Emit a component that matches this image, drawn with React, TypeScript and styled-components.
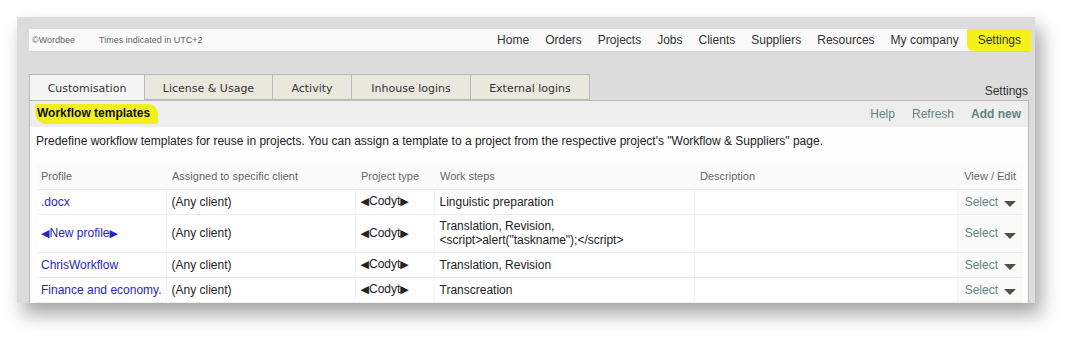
import React from 'react';
import styled, { createGlobalStyle } from 'styled-components';

const Global = createGlobalStyle`
  body {
    margin: 0;
    background: #ffffff;
    font-family: "Liberation Sans", Arial, sans-serif;
  }
`;

const Page = styled.div`
  width: 1083px;
  height: 352px;
  padding: 17px 0 0 17px;
  box-sizing: border-box;
`;

const Frame = styled.div`
  width: 1018px;
  height: 286px;
  background: #dcdcdc;
  box-shadow: 6px 11px 18px rgba(0, 0, 0, 0.36);
  padding: 12px 6px 0 12px;
  box-sizing: border-box;
  overflow: hidden;
`;

const TopBar = styled.div`
  height: 22px;
  background: #f9f9f9;
  border-bottom: 1px solid #cfcfcf;
  display: flex;
  align-items: center;
`;

const Small = styled.span<{ $left: number }>`
  font-size: 9px;
  color: #666;
  margin-left: ${p => p.$left}px;
`;

const Nav = styled.nav`
  margin-left: auto;
  display: flex;
  align-items: center;
  height: 100%;
`;

const NavItem = styled.span<{ $marked?: boolean }>`
  font-size: 12px;
  color: #333;
  padding: 0 8px;
  height: 100%;
  display: flex;
  align-items: center;
  ${p => p.$marked && `
    background: #f4f21a;
    padding: 0 10px 0 11px;
    border-radius: 2px 0 0 6px;
    margin-right: -2px;
  `}
`;

const TabRow = styled.div`
  margin-top: 22px;
  display: flex;
  align-items: flex-end;
  height: 26px;
`;

const Tab = styled.div<{ $active?: boolean; $w: number }>`
  width: ${p => p.$w}px;
  height: 26px;
  box-sizing: border-box;
  border: 1px solid #b9b9b9;
  border-left: ${p => (p.$active ? '1px solid #b9b9b9' : 'none')};
  border-bottom: ${p => (p.$active ? 'none' : '1px solid #b9b9b9')};
  background: ${p => (p.$active ? '#f5f5f5' : '#e9e8dd')};
  font-family: "DejaVu Sans", Verdana, sans-serif;
  font-size: 11px;
  color: #333;
  display: flex;
  align-items: center;
  justify-content: center;
  padding-top: 2px;
`;

const TabLabel = styled.span`
  margin-left: auto;
  font-size: 12px;
  color: #333;
  padding-bottom: 2px;
  margin-right: 1px;
`;

const Panel = styled.div`
  border: 1px solid #b9b9b9;
  background: #fdfdfd;
  height: 220px;
`;

const TitleBar = styled.div`
  height: 26px;
  background: #eeeeee;
  display: flex;
  align-items: center;
  padding: 0 7px 0 5px;
`;

const Title = styled.span`
  font-size: 12px;
  font-weight: bold;
  color: #111;
  background: #f2f01c;
  padding: 2px 8px 4px 2px;
  border-radius: 2px 10px 2px 12px;
`;

const Actions = styled.div`
  margin-left: auto;
  display: flex;
  gap: 17px;
`;

const Action = styled.span<{ $bold?: boolean }>`
  font-size: 12px;
  color: #628480;
  font-weight: ${p => (p.$bold ? 'bold' : 'normal')};
`;

const Intro = styled.p`
  margin: 0;
  padding: 7px 6px 0 6px;
  font-size: 12px;
  color: #222;
  height: 31px;
  box-sizing: border-box;
`;

const Table = styled.table`
  margin: 6px 0 0 7px;
  width: 986px;
  border-collapse: collapse;
  table-layout: fixed;
  font-size: 12px;
`;

const Th = styled.th<{ $w: number; $right?: boolean }>`
  box-sizing: border-box;
  width: ${p => p.$w}px;
  font-weight: normal;
  font-size: 11px;
  color: #666;
  text-align: ${p => (p.$right ? 'right' : 'left')};
  padding: ${p => (p.$right ? '0 7px 0 0' : '0 0 0 6px')};
  height: 25px;
  border-bottom: 1px solid #e8e8e8;
  background: #fbfbfb;
  &:first-child {
    padding-left: 4px;
  }
`;

const Tr = styled.tr<{ $tall?: boolean }>`
  height: ${p => (p.$tall ? 38 : 25)}px;
  border-bottom: 1px solid #ebebeb;
  background: #ffffff;
`;

const Td = styled.td<{ $right?: boolean; $shade?: boolean }>`
  box-sizing: border-box;
  color: #222;
  padding: ${p => (p.$right ? '0 7px 0 0' : '0 0 0 5px')};
  vertical-align: middle;
  text-align: ${p => (p.$right ? 'right' : 'left')};
  border-right: 1px solid #f3f3f3;
  background: ${p => (p.$shade ? '#fafafa' : 'transparent')};
  line-height: 14px;
  white-space: nowrap;
  overflow: hidden;
  &:first-child {
    padding-left: 4px;
  }
  &:last-child {
    border-right: none;
  }
`;

const ProfileLink = styled.span`
  color: #2626c4;
`;

const Arrow = styled.span<{ $blue?: boolean }>`
  font-family: "DejaVu Sans", sans-serif;
  font-size: 11px;
  color: ${p => (p.$blue ? '#2626c4' : '#222')};
`;

const SelectBtn = styled.span`
  color: #628480;
  display: inline-flex;
  align-items: center;
  gap: 6px;
`;

const Caret = styled.svg`
  width: 12px;
  height: 6px;
  margin-top: 5px;
`;

const Codyt = () => (
  <>
    <Arrow>◀</Arrow>Codyt<Arrow>▶</Arrow>
  </>
);

const Select = () => (
  <SelectBtn>
    Select
    <Caret viewBox="0 0 12 6">
      <path d="M0 0 H12 L6 6 Z" fill="#564d45" />
    </Caret>
  </SelectBtn>
);

const rows = [
  { profile: '.docx', steps: ['Linguistic preparation'] },
  { profile: 'New profile', wrapped: true, steps: ['Translation, Revision,', '<script>alert("taskname");</script>'] },
  { profile: 'ChrisWorkflow', steps: ['Translation, Revision'] },
  { profile: 'Finance and economy.', steps: ['Transcreation'] },
];

const navItems = ['Home', 'Orders', 'Projects', 'Jobs', 'Clients', 'Suppliers', 'Resources', 'My company'];

const tabs = [
  { label: 'Customisation', w: 116, active: true },
  { label: 'License & Usage', w: 128 },
  { label: 'Activity', w: 79 },
  { label: 'Inhouse logins', w: 119 },
  { label: 'External logins', w: 119 },
];

export default function App() {
  return (
    <Page>
      <Global />
      <Frame>
        <TopBar>
          <Small $left={3}>©Wordbee</Small>
          <Small $left={24}>Times indicated in UTC+2</Small>
          <Nav>
            {navItems.map(n => (
              <NavItem key={n}>{n}</NavItem>
            ))}
            <NavItem $marked>Settings</NavItem>
          </Nav>
        </TopBar>
        <TabRow>
          {tabs.map(t => (
            <Tab key={t.label} $w={t.w} $active={t.active}>
              {t.label}
            </Tab>
          ))}
          <TabLabel>Settings</TabLabel>
        </TabRow>
        <Panel>
          <TitleBar>
            <Title>Workflow templates</Title>
            <Actions>
              <Action>Help</Action>
              <Action>Refresh</Action>
              <Action $bold>Add new</Action>
            </Actions>
          </TitleBar>
          <Intro>
            Predefine workflow templates for reuse in projects. You can assign a template to a project from the
            respective project's "Workflow &amp; Suppliers" page.
          </Intro>
          <Table>
            <thead>
              <tr>
                <Th $w={129}>Profile</Th>
                <Th $w={189}>Assigned to specific client</Th>
                <Th $w={79}>Project type</Th>
                <Th $w={260}>Work steps</Th>
                <Th $w={263}>Description</Th>
                <Th $w={66} $right>View / Edit</Th>
              </tr>
            </thead>
            <tbody>
              {rows.map(r => (
                <Tr key={r.profile} $tall={!!r.wrapped}>
                  <Td>
                    <ProfileLink>
                      {r.wrapped && <Arrow $blue>◀</Arrow>}
                      {r.profile}
                      {r.wrapped && <Arrow $blue>▶</Arrow>}
                    </ProfileLink>
                  </Td>
                  <Td>(Any client)</Td>
                  <Td>
                    <Codyt />
                  </Td>
                  <Td>
                    {r.steps.map((s, i) => (
                      <div key={i}>{s}</div>
                    ))}
                  </Td>
                  <Td />
                  <Td $right $shade>
                    <Select />
                  </Td>
                </Tr>
              ))}
            </tbody>
          </Table>
        </Panel>
      </Frame>
    </Page>
  );
}
